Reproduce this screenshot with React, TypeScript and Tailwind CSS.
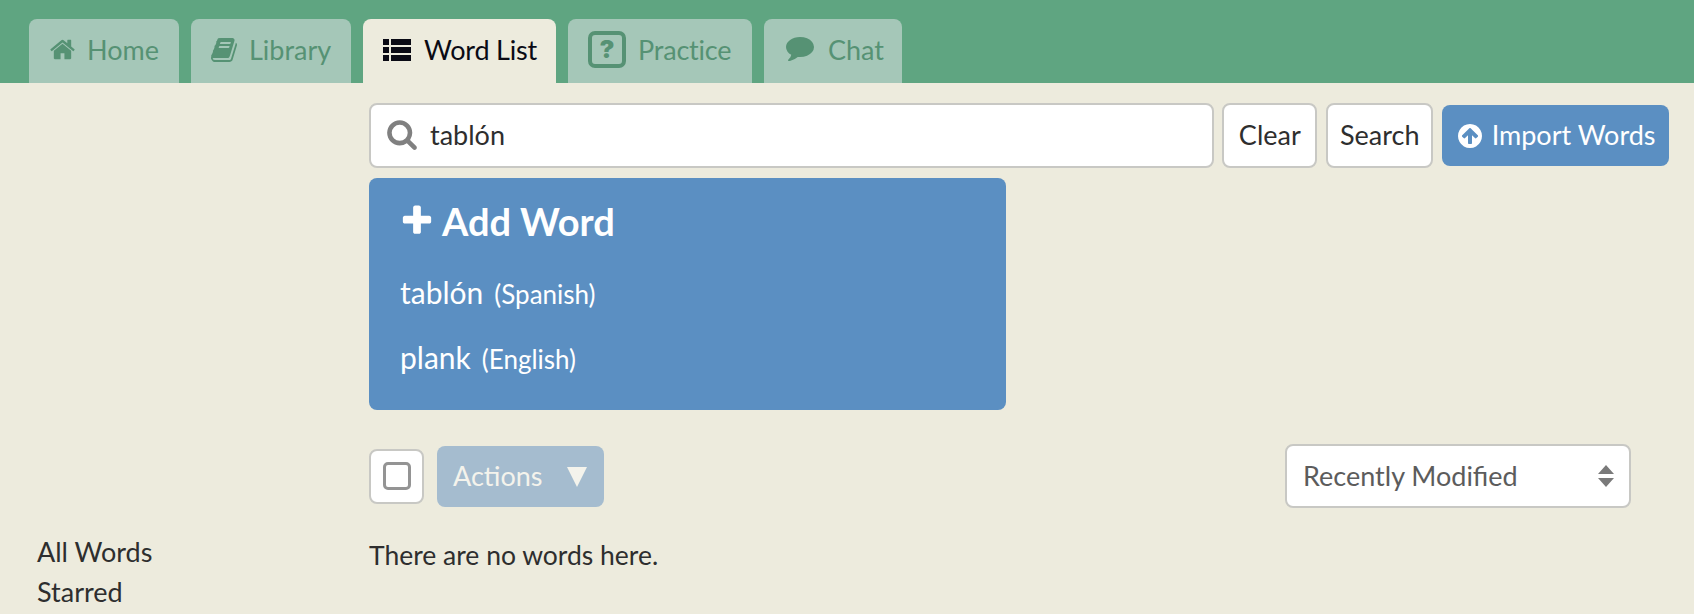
import type { ReactNode } from 'react'

const HOME = 'M1472 992v480q0 26-19 45t-45 19h-384v-384h-256v384h-384q-26 0-45-19t-19-45v-480q0-1 .5-3t.5-3l575-474 575 474q1 2 1 6zm223-69l-62 74q-8 9-21 11h-3q-13 0-21-7l-692-577-692 577q-12 8-24 7-13-2-21-11l-62-74q-8-10-7-23.5t11-21.5l719-599q32-26 76-26t76 26l244 204v-195q0-14 9-23t23-9h192q14 0 23 9t9 23v408l219 182q10 8 11 21.5t-7 23.5z'
const BOOK = 'M1639 478q40 57 18 129l-275 906q-19 64-76.5 107.5t-122.5 43.5h-923q-77 0-148.5-53.5t-99.5-131.5q-24-67-2-127 0-4 3-27t4-37q1-8-3-21.5t-3-19.5q2-11 8-21t16.5-23.5 16.5-23.5q23-38 45-91.5t30-91.5q3-10 .5-30t-.5-28q3-11 17-28t17-23q21-36 42-92t25-90q1-9-2.5-32t.5-28q4-13 22-30.5t22-22.5q19-26 42.5-84.5t27.5-96.5q1-8-3-25.5t-2-26.5q2-8 9-18t18-23 17-21q8-12 16.5-30.5t15-35 16-36 19.5-32 26.5-23.5 36-11.5 47.5 5.5l-1 3q38-9 51-9h761q74 0 114 56t18 130l-274 906q-36 119-71.5 153.5t-128.5 34.5h-869q-27 0-38 15-11 16-1 43 24 70 144 70h923q29 0 56-15.5t35-41.5l300-987q7-22 5-57 38 15 59 43zm-1064 2q-4 13 2 22.5t20 9.5h608q13 0 25.5-9.5t16.5-22.5l21-64q4-13-2-22.5t-20-9.5h-608q-13 0-25.5 9.5t-16.5 22.5zm-83 256q-4 13 2 22.5t20 9.5h608q13 0 25.5-9.5t16.5-22.5l21-64q4-13-2-22.5t-20-9.5h-608q-13 0-25.5 9.5t-16.5 22.5z'
const COMMENT = 'M1792 896q0 174-120 321.5t-326 233-450 85.5q-70 0-145-8-198 175-460 242-49 14-114 22-17 2-30.5-9t-17.5-29v-1q-3-4-.5-12t2-10 4.5-9.5l6-9 7-8.5 8-9q7-8 31-34.5t34.5-38 31-39.5 32.5-51 27-59 26-76q-157-89-247.5-220t-90.5-281q0-130 71-248.5t191-204.5 286-136.5 348-50.5q244 0 450 85.5t326 233 120 321.5z'
const SEARCH = 'M1216 832q0-185-131.5-316.5t-316.5-131.5-316.5 131.5-131.5 316.5 131.5 316.5 316.5 131.5 316.5-131.5 131.5-316.5zm512 832q0 52-38 90t-90 38q-54 0-90-38l-343-342q-179 124-399 124-143 0-273.5-55.5t-225-150-150-225-55.5-273.5 55.5-273.5 150-225 225-150 273.5-55.5 273.5 55.5 225 150 150 225 55.5 273.5q0 220-124 399l343 343q37 37 37 90z'
const UPLOAD = 'M1412 895q0-27-18-45l-362-362-91-91q-18-18-45-18t-45 18l-91 91-362 362q-18 18-18 45t18 45l91 91q18 18 45 18t45-18l189-189v502q0 26 19 45t45 19h128q26 0 45-19t19-45v-502l189 189q19 19 45 19t45-19l91-91q18-18 18-45zm252 1q0 209-103 385.5t-279.5 279.5-385.5 103-385.5-103-279.5-279.5-103-385.5 103-385.5 279.5-279.5 385.5-103 385.5 103 279.5 279.5 103 385.5z'
const PLUS = 'M1600 736v192q0 40-28 68t-68 28h-416v416q0 40-28 68t-68 28h-192q-40 0-68-28t-28-68v-416h-416q-40 0-68-28t-28-68v-192q0-40 28-68t68-28h416v-416q0-40 28-68t68-28h192q40 0 68 28t28 68v416h416q40 0 68 28t28 68z'

function Fa({ d, className }: { d: string; className: string }) {
  return (
    <svg viewBox="0 0 1792 1792" fill="currentColor" className={className}>
      <path d={d} />
    </svg>
  )
}

function Tab({ icon, label, active, className }: { icon: ReactNode; label: string; active?: boolean; className: string }) {
  return (
    <div
      className={`flex h-[64px] items-center rounded-t-lg pb-[3px] text-[27px] ${active ? 'bg-[#edebdd] text-[#0a0a14]' : 'bg-[#a5c7b8] text-[#569274]'} ${className}`}
    >
      {icon}
      <span className="pt-[2px]">{label}</span>
    </div>
  )
}

const BTN = 'flex h-[65px] items-center justify-center rounded-lg border-2 border-[#c8c8c4] bg-white text-[27px] text-[#2e2e2e]'

export default function App() {
  return (
    <div className="h-[614px] overflow-hidden bg-[#edebdd] font-['Lato',sans-serif] text-[#2e2e2e]">
      <div className="flex h-[83px] items-end gap-3 bg-[#5fa581] pl-[29px]">
        <Tab
          className="w-[150px] pl-5"
          label="Home"
          icon={<Fa d={HOME} className="mr-[11px] h-[27px] w-[27px]" />}
        />
        <Tab
          className="w-[160px] pl-5"
          label="Library"
          icon={<Fa d={BOOK} className="mr-[10px] h-[28px] w-[28px]" />}
        />
        <Tab
          active
          className="w-[193px] pl-[20px] tracking-[-0.2px]"
          label="Word List"
          icon={
            <svg viewBox="0 0 28 24" fill="currentColor" className="mr-[13px] h-[26px] w-[28px]">
              <path d="M0 1h6v6H0zM8 1h20v6H8zM0 9h6v6H0zM8 9h20v6H8zM0 17h6v6H0zM8 17h20v6H8z" />
            </svg>
          }
        />
        <Tab
          className="w-[184px] pl-5 tracking-[-0.2px]"
          label="Practice"
          icon={
            <span className="mr-[12px] flex h-[37px] w-[38px] items-center justify-center rounded-[7px] border-[4px] border-current font-['Inter',sans-serif] text-[25px] leading-none font-black">
              ?
            </span>
          }
        />
        <Tab
          className="w-[138px] pl-[22px]"
          label="Chat"
          icon={<Fa d={COMMENT} className="mr-[14px] -mt-[5px] h-[28px] w-[28px]" />}
        />
      </div>

      <div className="flex">
        <div className="w-[369px] shrink-0 pt-[449px] pl-[37px] text-[27px] leading-[40px]">
          <div>All Words</div>
          <div>Starred</div>
        </div>

        <div className="min-w-0 flex-1 pt-5 pr-[25px]">
          <div className="flex items-center">
            <div className="flex h-[65px] w-[846px] items-center rounded-lg border-2 border-[#c8c8c4] bg-white pl-[15px] text-[27px] text-[#2e2e2e]">
              <Fa d={SEARCH} className="mr-[12px] -mt-[3px] h-[32px] w-[32px] text-[#808080]" />
              tablón
            </div>
            <div className={`${BTN} ml-2 w-[95px]`}>Clear</div>
            <div className={`${BTN} ml-[9px] w-[107px]`}>Search</div>
            <div className="ml-[9px] flex h-[61px] w-[227px] items-center justify-center rounded-lg bg-[#5b8fc2] text-[27px] text-white">
              <Fa d={UPLOAD} className="mr-[8px] h-[28px] w-[28px]" />
              Import Words
            </div>
          </div>

          <div className="mt-[10px] h-[232px] w-[637px] rounded-lg bg-[#5b8fc2] pt-[18px] pl-[31px] text-white">
            <div className="flex h-[50px] items-center text-[38px] font-bold">
              <Fa d={PLUS} className="mr-[7px] -ml-[1px] h-[36px] w-[36px]" />
              Add Word
            </div>
            <div className="mt-[24px] flex h-[32px] items-baseline text-[30px]">
              tablón<span className="ml-[11px] text-[26px]">(Spanish)</span>
            </div>
            <div className="mt-[33px] flex h-[32px] items-baseline text-[30px]">
              plank<span className="ml-[11px] text-[26px]">(English)</span>
            </div>
          </div>

          <div className="mt-[34px] flex items-center justify-between pr-[38px]">
            <div className="flex items-center">
              <div className="flex h-[55px] w-[55px] items-center justify-center rounded-lg border-2 border-[#c8c8c4] bg-white">
                <div className="h-[28px] w-[28px] rounded-[5px] border-[3px] border-[#949494]" />
              </div>
              <div className="ml-[13px] flex h-[61px] w-[167px] items-center rounded-lg bg-[#a5bccf] pl-4 text-[27px] text-[#f4f3ec]">
                Actions
                <svg viewBox="0 0 20 20" fill="currentColor" className="ml-[24px] mt-[1px] h-[20px] w-[20px]">
                  <path d="M0 0h20L10 20z" />
                </svg>
              </div>
            </div>
            <div className="flex h-[64px] w-[346px] items-center justify-between rounded-lg border-2 border-[#c8c8c4] bg-white pr-[15px] pl-[16px] text-[27px] text-[#5c5c5c]">
              Recently Modified
              <svg viewBox="0 0 16 22" fill="#7a7a7a" className="h-[22px] w-[16px]">
                <path d="M8 0l8 9H0zM0 13h16l-8 9z" />
              </svg>
            </div>
          </div>

          <div className="mt-[27px] text-[26.5px] leading-[40px]">There are no words here.</div>
        </div>
      </div>
    </div>
  )
}
